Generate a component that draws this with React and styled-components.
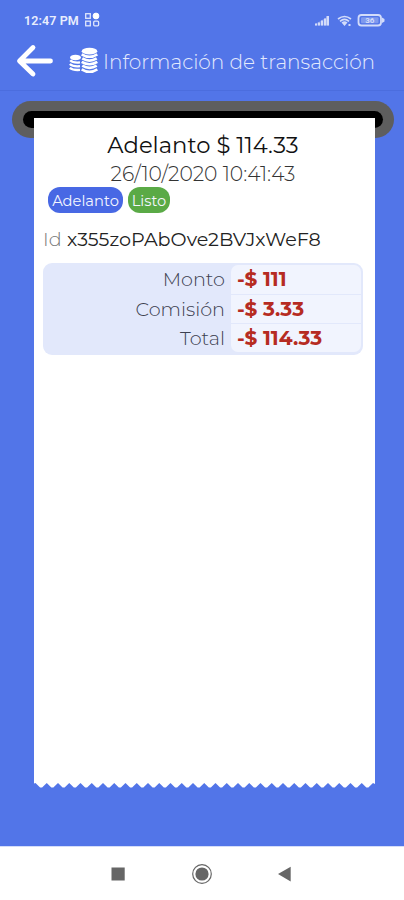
import React from 'react'
import styled, { createGlobalStyle } from 'styled-components';


const details = [
  { label: 'Monto', value: '-$ 111' },
  { label: 'Comisión', value: '-$ 3.33' },
  { label: 'Total', value: '-$ 114.33' },
]

function StatusIcons() {
  return (
    <svg width="72" height="16" viewBox="0 0 72 16" fill="#d3dcfa">
      <path d="M1 11.500h2v2H1zM4 10.500h2v3H4zM7 8.500h2v5H7zM10 6.500h2v7h-2zM12.500 4h2.500v9.500h-2.500z" />
      <path d="M1 12L15 4v9.500H1z" opacity="0.300" />
      <g fill="none" stroke="#d3dcfa" strokeWidth="1.600">
        <path d="M24 7Q30.500 2 37 7" />
        <path d="M26 9.300Q30.500 5.500 35 9.300" />
      </g>
      <path d="M27.500 10.500Q30.500 8 33.500 10.500L30.500 14zM34.500 12h2v2h-2z" />
      <rect x="44.500" y="3" width="22.500" height="10.500" rx="3" fill="none" stroke="#d3dcfa" strokeWidth="1.800" />
      <path d="M68 5.500l2.500 1.500v2.500l-2.500 1.500z" />
      <rect x="47" y="5.200" width="17.500" height="6" rx="1" opacity="0.350" />
      <text x="55.800" y="11.200" textAnchor="middle" fontFamily="Roboto, sans-serif" fontWeight="700" fontSize="8">36</text>
    </svg>
  )
}

function AppsIcon() {
  return (
    <svg width="17" height="16" viewBox="0 0 17 16" fill="none" stroke="#dfe6fc" strokeWidth="1.300">
      <rect x="1.700" y="1.700" width="4.600" height="4.600" />
      <rect x="1.700" y="9.200" width="4.600" height="4.600" />
      <rect x="9.700" y="9.200" width="4.900" height="4.600" rx="1" />
      <circle cx="12" cy="4" r="2.900" fill="#fff" stroke="#fff" strokeWidth="1" />
    </svg>
  )
}

function BackArrow() {
  return (
    <svg width="38" height="34" viewBox="0 0 38 34" fill="none" stroke="#fff" strokeWidth="4.800" strokeLinecap="round" strokeLinejoin="round">
      <path d="M17 3.500L3.500 17L17 30M4 17H34.500" />
    </svg>
  )
}

function CoinsIcon() {
  return (
    <svg width="30" height="27" viewBox="0 0 30 27" fill="#fff">
      <ellipse cx="6.500" cy="10.500" rx="5.500" ry="2.800" />
      <g fill="none" stroke="#fff" strokeWidth="2.300">
        <path d="M1.200 13.200Q4 16.200 11 15.400" />
        <path d="M.8 17Q4 20 11 19.200" />
        <path d="M.8 20.800Q4 23.500 11 22.900" />
      </g>
      <ellipse cx="20.500" cy="4.200" rx="7.800" ry="3.400" />
      <g fill="none" stroke="#fff" strokeWidth="2.700">
        <path d="M12.700 7.300Q20.500 12.200 28.300 7.300" />
        <path d="M13.300 11.300Q20.500 15.800 27.700 11.300" />
        <path d="M12.700 14.900Q20.500 19.600 28.300 14.900" />
        <path d="M13.300 18.700Q20.500 23.200 27.700 18.700" />
        <path d="M12.700 22.300Q20.500 27.200 28.300 22.300" />
      </g>
    </svg>
  )
}

function NavIcon({ name }) {
  return (
    <svg width="22" height="22" viewBox="0 0 22 22" fill="#666">
      {name === 'recent' && <rect x="4.500" y="4.500" width="13.200" height="13" />}
      {name === 'home' && <>
        <circle cx="11" cy="11" r="9.300" fill="none" stroke="#666" strokeWidth="1.200" />
        <circle cx="11" cy="11" r="6.600" />
      </>}
      {name === 'back' && <path d="M4 11L16.700 3.800V18.400z" />}
    </svg>
  )
}

// Torn edge at the bottom of the receipt
function TornEdge() {
  let d = 'M0 0V.5L1.500 0'
  for (let i = 0; i < 30; i++) {
    const x = 1.5 + i * 11.25
    d += `L${x + 4.6} 4.500H${x + 6.6}L${x + 11.25} 0`
  }
  return (
    <svg width="341" height="5" viewBox="0 0 341 5" fill="#fff">
      <path d={d + 'L341 1V0z'} />
    </svg>
  )
}

function App() {
  return (
    <Screen>
      <GlobalStyle />
      <StatusBar>
        <Clock>12:47 PM</Clock>
        <AppsIcon />
        <Spacer />
        <StatusIcons />
      </StatusBar>

      <Header>
        <BackArrow />
        <CoinsIcon />
        <HeaderTitle>Información de transacción</HeaderTitle>
      </Header>

      <Body>
        <Slot><SlotHole /></Slot>
        <Receipt>
          <Title>Adelanto $ 114.33</Title>
          <DateText>26/10/2020 10:41:43</DateText>
          <Tags>
            <Tag $color="#4868e4" $width={75}>Adelanto</Tag>
            <Tag $color="#5aaa46" $width={42}>Listo</Tag>
          </Tags>
          <IdRow>
            <IdLabel>Id</IdLabel>
            <IdValue>x355zoPAbOve2BVJxWeF8</IdValue>
          </IdRow>
          <Table>
            {details.map(d => (
              <Row key={d.label}>
                <Label>{d.label}</Label>
                <Value>{d.value}</Value>
              </Row>
            ))}
          </Table>
        </Receipt>
        <TornEdge />
      </Body>

      <NavBar>
        <NavIcon name="recent" />
        <NavIcon name="home" />
        <NavIcon name="back" />
      </NavBar>
    </Screen>
  )
}

export default App

const GlobalStyle = createGlobalStyle`
    * { box-sizing: border-box; }
    body { margin: 0; }
    svg { display: block; flex-shrink: 0; }
`

const Screen = styled.div`
    width: 404px;
    height: 900px;
    display: flex;
    flex-direction: column;
    overflow: hidden;
    background: #5275e8;
    font-family: Montserrat, Inter, sans-serif;
    white-space: nowrap;
`

const StatusBar = styled.div`
    height: 40px;
    padding: 0 18px 0 24px;
    display: flex;
    align-items: center;
`

const Clock = styled.div`
    width: 60px;
    font: 600 12.5px Roboto, sans-serif;
    letter-spacing: 0.1px;
    color: #e8edfd;
`

const Spacer = styled.div`
    flex: 1;
`

const Header = styled.div`
    height: 51px;
    padding: 0 0 9px 16px;
    display: flex;
    align-items: center;
    border-bottom: 1px solid #4b6dde;

    svg + svg { margin-left: 15px; }
`

const HeaderTitle = styled.div`
    margin: 2px 0 0 4px;
    font-size: 20.1px;
    font-weight: 300;
    color: #e4eafd;
`

const Body = styled.div`
    flex: 1;
    padding-top: 10px;
    display: flex;
    flex-direction: column;
    align-items: center;
`

const Slot = styled.div`
    width: 382px;
    height: 37px;
    margin-left: 2px;
    padding: 10px 11px;
    border-radius: 19px;
    background: #5e5e5e;
`

const SlotHole = styled.div`
    height: 17px;
    border-radius: 9px;
    background: #000;
`

// Slides out of the slot, so it overlaps its lower half
const Receipt = styled.div`
    width: 341px;
    height: 665px;
    margin: -20px 0 0 5px;
    padding: 12px 12px 0 9px;
    position: relative;
    background: #fff;

    & + svg { margin-left: 5px; }
`

const Title = styled.div`
    height: 30px;
    line-height: 31px;
    text-align: center;
    font-size: 22.7px;
    color: #111;
`

const DateText = styled.div`
    height: 27px;
    line-height: 28px;
    text-align: center;
    font-size: 20.3px;
    font-weight: 300;
    color: #333;
`

const Tags = styled.div`
    display: flex;
    gap: 5px;
    padding-left: 5px;
`

const Tag = styled.div`
    width: ${p => p.$width}px;
    height: 26px;
    line-height: 28px;
    border-radius: 12px;
    text-align: center;
    font-size: 14.7px;
    color: #f4f6ff;
    background: ${p => p.$color};
`

const IdRow = styled.div`
    display: flex;
    gap: 6px;
    height: 30px;
    line-height: 30px;
    margin: 11px 0 9px;
    font-size: 19.15px;
`

const IdLabel = styled.span`
    width: 18px;
    font-weight: 300;
    color: #777;
`

const IdValue = styled.span`
    font-weight: 400;
    color: #222;
`

const Table = styled.div`
    height: 92px;
    padding: 2px;
    border-radius: 9px;
    background: #e2e8fb;
`

const Row = styled.div`
    display: grid;
    grid-template-columns: 186px 1fr;
    height: 29px;
    line-height: 29px;
    font-size: 19.2px;

    & + & { border-top: 1px solid #e2e8fb; line-height: 28px; }
`

const Label = styled.div`
    padding-right: 6px;
    text-align: right;
    font-weight: 300;
    color: #3c4050;
`

const Value = styled.div`
    padding-left: 6px;
    background: #f1f4fe;
    font-size: 20.1px;
    font-weight: 700;
    color: #b62b22;

    ${Row}:first-child & { border-radius: 7px 7px 0 0; }
    ${Row}:last-child & { border-radius: 0 0 7px 7px; }
`

const NavBar = styled.div`
    height: 54px;
    padding: 0 108px 0 107px;
    display: flex;
    align-items: center;
    justify-content: space-between;
    border-top: 1px solid #d4ddf9;
    background: #fff;
`
